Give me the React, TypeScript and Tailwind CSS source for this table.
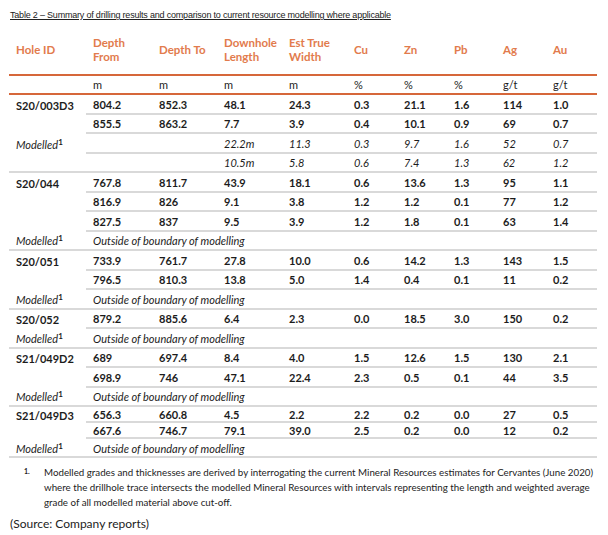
import React from 'react';

type Row = {
  id?: string;
  label?: boolean;
  italic?: boolean;
  outside?: boolean;
  cells?: string[];
  h?: string;
};

type Group = Row[];

const widths = ['w-[66px]', 'w-[65px]', 'w-[65px]', 'w-[65px]', 'w-[50px]', 'w-[50px]', 'w-[49px]', 'w-[50px]', 'w-[51px]'];

const groups: Group[] = [
  [
    { id: 'S20/003D3', cells: ['804.2', '852.3', '48.1', '24.3', '0.3', '21.1', '1.6', '114', '1.0'] },
    { cells: ['855.5', '863.2', '7.7', '3.9', '0.4', '10.1', '0.9', '69', '0.7'] },
    { label: true, italic: true, cells: ['', '', '22.2m', '11.3', '0.3', '9.7', '1.6', '52', '0.7'] },
    { italic: true, cells: ['', '', '10.5m', '5.8', '0.6', '7.4', '1.3', '62', '1.2'] },
  ],
  [
    { id: 'S20/044', cells: ['767.8', '811.7', '43.9', '18.1', '0.6', '13.6', '1.3', '95', '1.1'] },
    { cells: ['816.9', '826', '9.1', '3.8', '1.2', '1.2', '0.1', '77', '1.2'] },
    { cells: ['827.5', '837', '9.5', '3.9', '1.2', '1.8', '0.1', '63', '1.4'] },
    { label: true, outside: true },
  ],
  [
    { id: 'S20/051', cells: ['733.9', '761.7', '27.8', '10.0', '0.6', '14.2', '1.3', '143', '1.5'] },
    { cells: ['796.5', '810.3', '13.8', '5.0', '1.4', '0.4', '0.1', '11', '0.2'] },
    { label: true, outside: true },
  ],
  [
    { id: 'S20/052', cells: ['879.2', '885.6', '6.4', '2.3', '0.0', '18.5', '3.0', '150', '0.2'] },
    { label: true, outside: true },
  ],
  [
    { id: 'S21/049D2', cells: ['689', '697.4', '8.4', '4.0', '1.5', '12.6', '1.5', '130', '2.1'] },
    { cells: ['698.9', '746', '47.1', '22.4', '2.3', '0.5', '0.1', '44', '3.5'] },
    { label: true, outside: true },
  ],
  [
    { id: 'S21/049D3', h: 'h-[16px]', cells: ['656.3', '660.8', '4.5', '2.2', '2.2', '0.2', '0.0', '27', '0.5'] },
    { h: 'h-[16px]', cells: ['667.6', '746.7', '79.1', '39.0', '2.5', '0.2', '0.0', '12', '0.2'] },
    { label: true, outside: true, h: 'h-[19px]' },
  ],
];

const headers = [
  ['Depth', 'From'],
  ['Depth To'],
  ['Downhole', 'Length'],
  ['Est True', 'Width'],
  ['Cu'],
  ['Zn'],
  ['Pb'],
  ['Ag'],
  ['Au'],
];

const units = ['m', 'm', 'm', 'm', '%', '%', '%', 'g/t', 'g/t'];

function Modelled() {
  return (
    <span className="italic font-normal">
      Modelled<sup className="text-[8px] font-bold not-italic">1</sup>
    </span>
  );
}

function DataRow({ row, last }: { row: Row; last: boolean }) {
  const h = row.h || 'h-[19.5px]';
  return (
    <div className={`flex ${h}`}>
      <div
        className={`w-[77px] shrink-0 pl-[7px] flex items-center pt-[2px] font-bold ${
          last ? 'border-b-2 border-[#d9d9d9]' : ''
        }`}
      >
        {row.id}
        {row.label && <Modelled />}
      </div>
      <div className="flex flex-1 border-b-2 border-[#d9d9d9]">
        {row.outside ? (
          <div className="pl-[7px] flex items-center pt-[2px] italic">Outside of boundary of modelling</div>
        ) : (
          row.cells!.map((c, i) => (
            <div
              key={i}
              className={`${widths[i]} shrink-0 pl-[7px] flex items-center pt-[2px] ${
                row.italic ? 'italic font-normal' : 'font-bold'
              }`}
            >
              {c}
            </div>
          ))
        )}
      </div>
    </div>
  );
}

export default function App() {
  return (
    <div className="w-[608px] h-[535px] bg-white text-[#1c1c1c] overflow-hidden relative">
      <div className="pl-[10px] pt-[9px] h-[26px] font-['Liberation_Sans',Arial,sans-serif] text-[9px] leading-[12px] underline text-[#222] tracking-[-0.2px]">
        Table 2 – Summary of drilling results and comparison to current resource modelling where applicable
      </div>

      <div className="ml-[9px] w-[588px] font-['Lato',sans-serif] text-[11px] leading-[14px]">
        <div className="flex h-[50px] border-b-2 border-[#d6673a] text-[#e27b4d] font-bold text-[11.5px]">
          <div className="w-[77px] shrink-0 pl-[7px] flex items-center">Hole ID</div>
          {headers.map((h, i) => (
            <div key={i} className={`${widths[i]} shrink-0 pl-[7px] flex flex-col justify-center`}>
              {h.map((t) => (
                <span key={t}>{t}</span>
              ))}
            </div>
          ))}
        </div>

        <div className="flex h-[19px] border-b-2 border-[#d6673a]">
          <div className="w-[77px] shrink-0" />
          {units.map((u, i) => (
            <div key={i} className={`${widths[i]} shrink-0 pl-[7px] flex items-center pt-[1px]`}>
              {u}
            </div>
          ))}
        </div>

        {groups.map((g, gi) => (
          <div key={gi}>
            {g.map((r, ri) => (
              <DataRow key={ri} row={r} last={ri === g.length - 1} />
            ))}
          </div>
        ))}
      </div>

      <div className="flex pt-[7px] font-['Lato',sans-serif] text-[9.75px] leading-[15px] text-[#222]">
        <div className="w-[44px] shrink-0 pl-[24px] text-[7px] leading-[12px] font-bold">1.</div>
        <div className="whitespace-nowrap">
          Modelled grades and thicknesses are derived by interrogating the current Mineral Resources estimates for Cervantes (June 2020)
          <br />
          where the drillhole trace intersects the modelled Mineral Resources with intervals representing the length and weighted average
          <br />
          grade of all modelled material above cut-off.
        </div>
      </div>

      <div className="pl-[10px] pt-[6px] font-['Lato',sans-serif] text-[12px] leading-[16px] text-[#222]">
        (Source: Company reports)
      </div>
    </div>
  );
}
